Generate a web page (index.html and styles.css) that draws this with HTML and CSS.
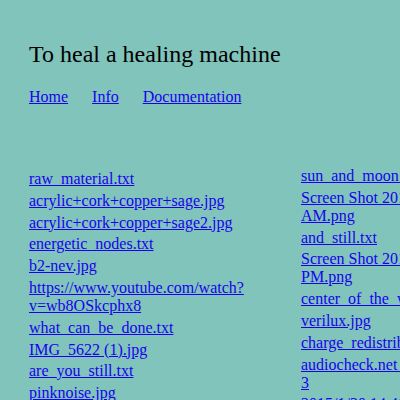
FILE: index.html
```html
<!DOCTYPE html>
<html>
<head>
<meta charset="utf-8">
<title>To heal a healing machine</title>
<link rel="stylesheet" href="styles.css">
</head>
<body>
<div class="page">
  <h1 class="title">To heal a healing machine</h1>
  <nav class="nav">
    <a href="#">Home</a>
    <a href="#">Info</a>
    <a href="#">Documentation</a>
  </nav>
  <div class="files">
    <div class="col col-left">
      <a class="item" href="#">raw_material.txt</a>
      <a class="item" href="#">acrylic+cork+copper+sage.jpg</a>
      <a class="item" href="#">acrylic+cork+copper+sage2.jpg</a>
      <a class="item" href="#">energetic_nodes.txt</a>
      <a class="item" href="#">b2-nev.jpg</a>
      <a class="item" href="#">https://www.youtube.com/watch?v=wb8OSkcphx8</a>
      <a class="item" href="#">what_can_be_done.txt</a>
      <a class="item" href="#">IMG_5622 (1).jpg</a>
      <a class="item" href="#">are_you_still.txt</a>
      <a class="item" href="#">pinknoise.jpg</a>
    </div>
    <div class="col col-right">
      <a class="item" href="#">sun_and_moon_rituals.txt</a>
      <a class="item" href="#">Screen Shot 2019-01-12 at 10.32.15 AM.png</a>
      <a class="item" href="#">and_still.txt</a>
      <a class="item" href="#">Screen Shot 2019-01-14 at 4.18.02 PM.png</a>
      <a class="item" href="#">center_of_the_world.txt</a>
      <a class="item" href="#">verilux.jpg</a>
      <a class="item" href="#">charge_redistribution.txt</a>
      <a class="item" href="#">audiocheck.net_pinknoise_48k_stereo_loop 3</a>
      <a class="item" href="#">2015/1/30 14.46.wav</a>
    </div>
  </div>
</div>
</body>
</html>
```
FILE: styles.css
```css
html, body {
  overflow: hidden;
}
body {
  margin: 0;
  background: #80c4bb;
  font-family: "Liberation Serif", "Times New Roman", serif;
  font-size: 16px;
  color: #000;
}
a {
  color: #1a00ee;
}
.page {
  padding: 41px 0 0 29px;
}
.title {
  margin: 0;
  font-size: 24px;
  font-weight: normal;
  line-height: normal;
}
.nav {
  margin-top: 20px;
  display: flex;
  gap: 24px;
}
.files {
  margin-top: 61px;
  display: grid;
  grid-template-columns: 250px 250px;
  column-gap: 22px;
  align-items: start;
}
.col {
  display: flex;
  flex-direction: column;
  align-items: flex-start;
}
.col-left {
  padding-top: 3px;
}
.item {
  display: block;
  line-height: 18px;
  margin-bottom: 3.8px;
}
```
